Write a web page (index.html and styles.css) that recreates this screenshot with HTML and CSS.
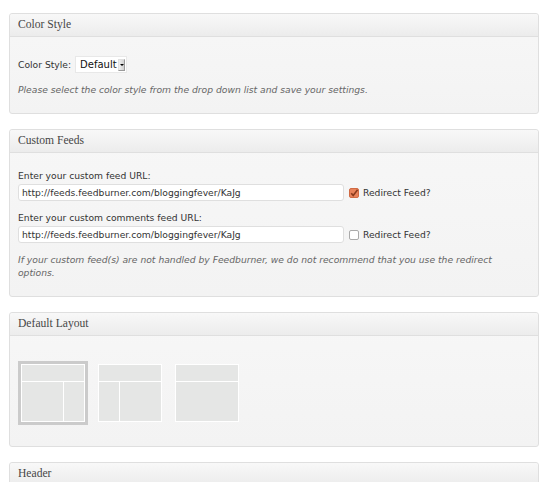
FILE: index.html
```html
<!DOCTYPE html>
<html>
<head>
<meta charset="utf-8">
<link rel="stylesheet" href="styles.css">
</head>
<body>
<div class="wrap">
  <div class="panel">
    <div class="panel-head">Color Style</div>
    <div class="panel-body p1">
      <div class="row">
        <span class="lbl">Color Style:</span>
        <div class="select"><span>Default</span><span class="sel-btn"><span class="arrow"></span></span></div>
      </div>
      <p class="note">Please select the color style from the drop down list and save your settings.</p>
    </div>
  </div>

  <div class="panel">
    <div class="panel-head">Custom Feeds</div>
    <div class="panel-body p2">
      <div class="field-label">Enter your custom feed URL:</div>
      <div class="field-row">
        <div class="input">http://feeds.feedburner.com/bloggingfever/KaJg</div>
        <span class="check checked"><svg viewBox="0 0 10 10" width="10" height="10"><path d="M2.2 5.2 L4.2 7.4 L8.6 1.8" fill="none" stroke="#8a3a1c" stroke-width="1.6"/></svg></span>
        <span class="check-lbl">Redirect Feed?</span>
      </div>
      <div class="field-label second">Enter your custom comments feed URL:</div>
      <div class="field-row">
        <div class="input">http://feeds.feedburner.com/bloggingfever/KaJg</div>
        <span class="check"></span>
        <span class="check-lbl">Redirect Feed?</span>
      </div>
      <p class="note two">If your custom feed(s) are not handled by Feedburner, we do not recommend that you use the redirect options.</p>
    </div>
  </div>

  <div class="panel">
    <div class="panel-head">Default Layout</div>
    <div class="panel-body p3">
      <div class="layouts">
        <div class="layout selected">
          <svg viewBox="0 0 64 58" width="64" height="58"><rect width="64" height="58" fill="#fff"/><rect x="1" y="1" width="62" height="16" fill="#e5e6e5"/><rect x="1" y="18" width="41" height="39" fill="#e5e6e5"/><rect x="43" y="18" width="20" height="39" fill="#e5e6e5"/></svg>
        </div>
        <div class="layout">
          <svg viewBox="0 0 64 58" width="64" height="58"><rect width="64" height="58" fill="#fff"/><rect x="1" y="1" width="62" height="16" fill="#e5e6e5"/><rect x="1" y="18" width="20" height="39" fill="#e5e6e5"/><rect x="22" y="18" width="41" height="39" fill="#e5e6e5"/></svg>
        </div>
        <div class="layout">
          <svg viewBox="0 0 64 58" width="64" height="58"><rect width="64" height="58" fill="#fff"/><rect x="1" y="1" width="62" height="16" fill="#e5e6e5"/><rect x="1" y="18" width="62" height="39" fill="#e5e6e5"/></svg>
        </div>
      </div>
    </div>
  </div>

  <div class="panel">
    <div class="panel-head">Header</div>
    <div class="panel-body p4"></div>
  </div>
</div>
</body>
</html>
```

FILE: styles.css
```css
html, body {
  margin: 0;
  padding: 0;
  background: #fff;
}
body {
  font-family: "DejaVu Sans", Verdana, sans-serif;
  font-size: 9.2px;
  color: #333;
}
.wrap {
  width: 530px;
  padding: 13px 0 0 9px;
}
.panel {
  border: 1px solid #dfdfdf;
  border-radius: 3px;
  background: linear-gradient(#f7f7f7, #f3f3f3);
  margin-bottom: 15px;
}
.panel-head {
  height: 22px;
  line-height: 22px;
  padding: 0 8px;
  border-bottom: 1px solid #dfdfdf;
  background: linear-gradient(#f8f8f8, #ececec);
  font-family: "Liberation Serif", "Times New Roman", serif;
  font-size: 11.6px;
  color: #464646;
  border-radius: 3px 3px 0 0;
}
.panel-body {
  padding: 0 8px;
}
.p1 {
  padding-top: 19px;
  padding-bottom: 16px;
}
.row {
  display: flex;
  align-items: center;
  height: 17px;
}
.lbl {
  margin-right: 4px;
}
.select {
  display: flex;
  align-items: center;
  justify-content: space-between;
  width: 52px;
  height: 17px;
  box-sizing: border-box;
  background: #fff;
  border: 1px solid #e8e8e8;
  padding: 0 1px 0 4px;
  color: #111;
  font-size: 10px;
}
.sel-btn {
  width: 7px;
  height: 12px;
  background: linear-gradient(90deg, #f0f0f0, #cfcfcf);
  border: 1px solid #9a9a9a;
  border-top-color: #e0e0e0;
  border-left-color: #e0e0e0;
  box-sizing: border-box;
  display: flex;
  align-items: center;
  justify-content: center;
}
.arrow {
  width: 0;
  height: 0;
  border-left: 2px solid transparent;
  border-right: 2px solid transparent;
  border-top: 2px solid #000;
}
.note {
  margin: 10px 0 0;
  line-height: 14px;
  font-style: italic;
  color: #666;
}
.p2 {
  padding-top: 16px;
  padding-bottom: 17px;
}
.field-label {
  line-height: 14px;
  margin-bottom: 1px;
}
.field-label.second {
  margin-top: 10px;
}
.field-row {
  display: flex;
  align-items: center;
  height: 17px;
}
.input {
  width: 326px;
  height: 17px;
  box-sizing: border-box;
  background: #fff;
  border: 1px solid #dfdfdf;
  border-radius: 3px;
  padding: 0 3px;
  line-height: 15px;
  color: #333;
}
.check {
  width: 10px;
  height: 10px;
  box-sizing: border-box;
  margin-left: 5px;
  margin-right: 4px;
  border: 1px solid #aaa;
  border-radius: 2px;
  background: #fff;
  display: flex;
  align-items: center;
  justify-content: center;
  overflow: hidden;
}
.check.checked {
  background: #e8825a;
  border-color: #d06a43;
}
.check svg {
  display: block;
  flex: none;
}
.check-lbl {
  color: #333;
}
.note.two {
  margin-top: 10px;
  line-height: 13px;
}
.p3 {
  padding-top: 25px;
  padding-bottom: 21px;
}
.layouts {
  display: flex;
  gap: 7px;
}
.layout {
  border: 3px solid transparent;
  width: 64px;
  height: 58px;
}
.layout.selected {
  border-color: #cbcbcb;
}
.layout svg {
  display: block;
}
.p4 {
  height: 40px;
}
```
